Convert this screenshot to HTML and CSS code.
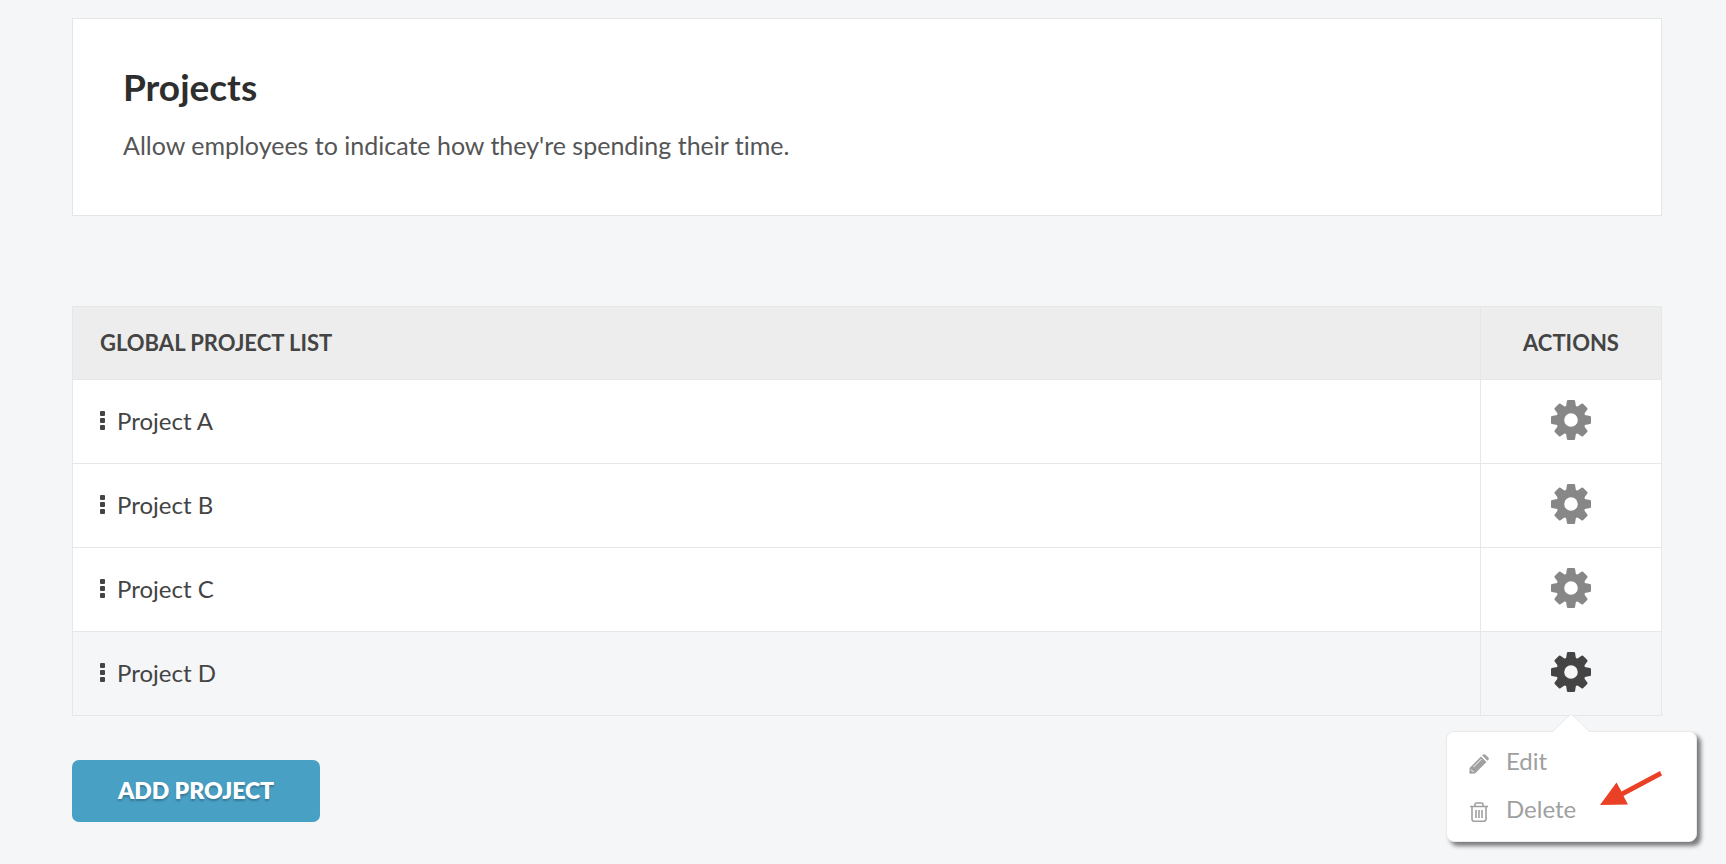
FILE: index.html
```
<!DOCTYPE html>
<html lang="en">
<head>
    <meta charset="UTF-8">
    <title>Projects</title>
    <link rel="stylesheet" href="styles.css">
</head>
<body>
    <!-- Shared icons -->
    <svg class="sprite" aria-hidden="true">
        <symbol id="icon-gear" viewBox="-20 -20 40 40">
            <g id="gear-teeth">
                <path id="tooth" d="M-5 -13.5 L-4.7 -15 L-4.1 -19 Q-3.9 -20 -3 -20 H3 Q3.9 -20 4.1 -19 L4.7 -15 L5 -13.5 V-8 H-5 Z M-5 13.5 L-4.7 15 L-4.1 19 Q-3.9 20 -3 20 H3 Q3.9 20 4.1 19 L4.7 15 L5 13.5 V8 H-5 Z"/>
                <use href="#tooth" transform="rotate(45)"/>
                <use href="#tooth" transform="rotate(90)"/>
                <use href="#tooth" transform="rotate(135)"/>
            </g>
            <circle class="gear-ring" r="10.8"/>
        </symbol>
        <symbol id="icon-grip" viewBox="0 0 5 19">
            <rect width="5" height="5" rx="1"/>
            <rect y="7" width="5" height="5" rx="1"/>
            <rect y="14" width="5" height="5" rx="1"/>
        </symbol>
    </svg>

    <div class="container">
        <div class="card">
            <h1>Projects</h1>
            <p>Allow employees to indicate how they're spending their time.</p>
        </div>

        <table class="project-table">
            <thead>
                <tr>
                    <th>GLOBAL PROJECT LIST</th>
                    <th class="actions">ACTIONS</th>
                </tr>
            </thead>
            <tbody>
                <tr>
                    <td><div class="project"><svg class="grip"><use href="#icon-grip"/></svg>Project A</div></td>
                    <td class="actions"><button class="gear" aria-label="Project A actions"><svg><use href="#icon-gear"/></svg></button></td>
                </tr>
                <tr>
                    <td><div class="project"><svg class="grip"><use href="#icon-grip"/></svg>Project B</div></td>
                    <td class="actions"><button class="gear" aria-label="Project B actions"><svg><use href="#icon-gear"/></svg></button></td>
                </tr>
                <tr>
                    <td><div class="project"><svg class="grip"><use href="#icon-grip"/></svg>Project C</div></td>
                    <td class="actions"><button class="gear" aria-label="Project C actions"><svg><use href="#icon-gear"/></svg></button></td>
                </tr>
                <tr class="active">
                    <td><div class="project"><svg class="grip"><use href="#icon-grip"/></svg>Project D</div></td>
                    <td class="actions">
                        <div class="dropdown">
                            <button class="gear" aria-label="Project D actions" aria-expanded="true"><svg><use href="#icon-gear"/></svg></button>
                            <div class="menu">
                                <svg class="caret" viewBox="0 0 38 20">
                                    <path class="caret-fill" d="M0 20 L19 1 L38 20 Z"/>
                                    <path class="caret-edge" d="M0 19 L19 1 L38 19"/>
                                </svg>
                                <a href="#">
                                    <svg viewBox="0 0 20 20">
                                        <path d="M0.5 19.8 V14 L12 2.5 L17.5 8 L6 19.5 Z M13.2 1.5 L14.2 0.6 Q15.3 -0.3 16.4 0.7 L19.3 3.6 Q20.3 4.7 19.4 5.8 L18.5 6.8 Z"/>
                                        <path class="cut" d="M4.5 13 L12.5 5 M2 15.5 L4.6 18.1"/>
                                    </svg>
                                    Edit
                                </a>
                                <a href="#">
                                    <svg class="outline" viewBox="0 0 20 20">
                                        <path d="M1 4.5 H19 M6 4 V2.5 Q6 1 7.5 1 H12.5 Q14 1 14 2.5 V4 M3 4.5 V17 Q3 19.2 5.2 19.2 H14.8 Q17 19.2 17 17 V4.5 M7 8 V16 M10 8 V16 M13 8 V16"/>
                                    </svg>
                                    Delete
                                </a>
                                <svg class="pointer" viewBox="0 0 62 34">
                                    <path d="M0 34 L16.5 11.5 L21.5 20.5 L60 0 L62 4.5 L23.5 25 L28 33.5 Z"/>
                                </svg>
                            </div>
                        </div>
                    </td>
                </tr>
            </tbody>
        </table>

        <button class="btn">ADD PROJECT</button>
    </div>
</body>
</html>
```

FILE: styles.css
```
* {
    box-sizing: border-box;
}
body {
    margin: 0;
    font-family: Lato, sans-serif;
    font-size: 24px;
    font-variant-ligatures: none;
    color: #444;
    background-color: #f5f6f8;
}
.sprite {
    position: absolute;
    width: 0;
    height: 0;
}
.container {
    padding: 18px 64px 42px 72px;
}
.card {
    padding: 46px 50px 48px;
    background-color: #fff;
    border: 1px solid #e4e5e6;
}
.card h1 {
    margin: 0 0 14px;
    font-size: 37px;
    line-height: 44px;
    color: #2e2e2e;
}
.card p {
    margin: 0;
    font-size: 25px;
    line-height: 44px;
    color: #555;
}
.project-table {
    width: 100%;
    margin-top: 90px;
    border-collapse: collapse;
}
.project-table th,
.project-table td {
    padding: 0 27px 2px;
    border: 1px solid #e6e7e8;
    text-align: left;
}
.project-table th {
    height: 73px;
    font-size: 22px;
    font-weight: 700;
    background-color: #ededed;
}
.project-table td {
    height: 84px;
    background-color: #fff;
}
.project-table .active td {
    background-color: #f5f6f8;
}
.project-table .actions {
    width: 181px;
    padding: 0 0 3px;
    text-align: center;
}
.project-table th.actions {
    padding-bottom: 2px;
}
.project {
    display: flex;
    align-items: center;
    gap: 12px;
}
.grip {
    width: 5px;
    height: 19px;
    fill: #444;
}
.gear {
    display: block;
    width: 40px;
    height: 40px;
    margin: 0 auto;
    padding: 0;
    border: 0;
    background: none;
    color: #878787;
    cursor: pointer;
}
.gear svg {
    display: block;
    width: 40px;
    height: 40px;
    fill: currentColor;
}
.gear-ring {
    fill: none;
    stroke: currentColor;
    stroke-width: 8px;
}
.active .gear {
    color: #444;
}
.dropdown {
    position: relative;
}
.menu {
    position: absolute;
    top: 79px;
    left: 50%;
    width: 251px;
    margin-left: -125px;
    padding: 4px 22px 9px;
    background-color: #fff;
    border: 1px solid #ebebec;
    border-radius: 8px;
    box-shadow: 4px 4px 4px rgba(0, 0, 0, 0.5);
}
.menu a {
    display: flex;
    align-items: center;
    gap: 17px;
    height: 48px;
    color: #a0a0a0;
    text-decoration: none;
}
.menu a svg {
    width: 20px;
    height: 20px;
    margin-top: 7px;
    fill: currentColor;
}
.menu a .outline {
    fill: none;
    stroke: currentColor;
    stroke-width: 1.6px;
}
.cut {
    fill: none;
    stroke: #fff;
    stroke-width: 1px;
}
.caret {
    position: absolute;
    top: -19px;
    left: 50%;
    width: 38px;
    height: 20px;
    margin-left: -20px;
}
.caret-fill {
    fill: #fff;
}
.caret-edge {
    fill: none;
    stroke: #ebebec;
}
.pointer {
    position: absolute;
    top: 39px;
    right: 34px;
    width: 62px;
    height: 34px;
    fill: #ea4025;
}
.btn {
    display: block;
    width: 248px;
    height: 62px;
    margin-top: 44px;
    padding: 0 0 2px;
    border: 0;
    border-radius: 7px;
    background-color: #48a0c5;
    color: #fff;
    font-family: inherit;
    font-size: 23px;
    font-weight: 800;
    text-shadow: 0 2px 2px rgba(0, 0, 0, 0.25);
    cursor: pointer;
}
```
